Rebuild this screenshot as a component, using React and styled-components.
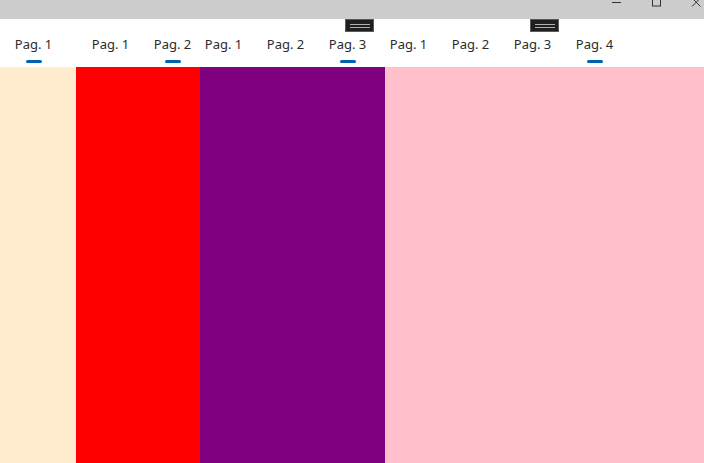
import styled, { createGlobalStyle } from 'styled-components';

const GlobalStyle = createGlobalStyle`
    html, body {
        margin: 0;
        padding: 0;
        overflow: hidden;
        background: #ffffff;
    }
`;

const Window = styled.div`
    display: flex;
    flex-direction: column;
    width: 704px;
    height: 463px;
    font-family: 'Segoe UI', 'Noto Sans', 'Open Sans', sans-serif;
`;

const TitleBar = styled.div`
    height: 19px;
    background: #cccccc;
    display: flex;
    justify-content: flex-end;
    overflow: hidden;
    flex-shrink: 0;
`;

const Controls = styled.div`
    display: flex;
    gap: 24px;
`;

const Control = styled.div`
    width: 16px;
    height: 19px;
    display: flex;
`;

const Panes = styled.div`
    display: flex;
    flex: 1;
    min-height: 0;
`;

const Pane = styled.div`
    position: relative;
    display: flex;
    flex-direction: column;
    width: ${(p) => p.$width}px;
    flex-shrink: 0;
`;

const Header = styled.div`
    height: 48px;
    background: #ffffff;
    display: flex;
    padding-left: ${(p) => p.$inset}px;
    gap: 25px;
    overflow: hidden;
    white-space: nowrap;
`;

const Tab = styled.div`
    display: flex;
    flex-direction: column;
    align-items: center;
    padding-top: 16px;
    font-size: 13px;
    line-height: 19px;
    color: #2b2b2b;
    width: 37px;
`;

const Indicator = styled.div`
    margin-top: 6px;
    width: 16px;
    height: 3px;
    border-radius: 2px;
    background: ${(p) => (p.$active ? '#0063b1' : 'transparent')};
`;

const Content = styled.div`
    flex: 1;
    background: ${(p) => p.$color};
`;

const Grip = styled.div`
    position: absolute;
    top: 0;
    left: ${(p) => p.$left}px;
    width: 27px;
    height: 11px;
    background: #1f1f1f;
    border: 1px solid #5a5a5a;
    display: flex;
    flex-direction: column;
    justify-content: center;
    align-items: center;
    gap: 2px;
`;

const GripLine = styled.div`
    width: 20px;
    height: 1px;
    background: #b0b0b0;
`;

const panes = [
    { width: 76, color: '#ffebcd', inset: 15, tabs: 1, active: 0 },
    { width: 124, color: '#ff0000', inset: 16, tabs: 2, active: 1 },
    { width: 185, color: '#800080', inset: 5, tabs: 3, active: 2, grip: 145 },
    { width: 319, color: '#ffc0cb', inset: 5, tabs: 4, active: 3, grip: 145 },
];

export default function App() {
    return (
        <Window>
            <GlobalStyle />
            <TitleBar>
                <Controls>
                    <Control>
                        <svg width="16" height="19" viewBox="0 0 16 19">
                            <line x1="4" y1="2.5" x2="13" y2="2.5" stroke="#333" strokeWidth="1" />
                        </svg>
                    </Control>
                    <Control>
                        <svg width="16" height="19" viewBox="0 0 16 19">
                            <rect x="4.5" y="-3" width="8" height="9" fill="none" stroke="#333" strokeWidth="1" />
                        </svg>
                    </Control>
                    <Control>
                        <svg width="16" height="19" viewBox="0 0 16 19">
                            <path d="M4 -2 L12.5 6.5 M12.5 -2 L4 6.5" stroke="#333" strokeWidth="1" />
                        </svg>
                    </Control>
                </Controls>
            </TitleBar>
            <Panes>
                {panes.map((pane, i) => (
                    <Pane key={i} $width={pane.width}>
                        <Header $inset={pane.inset}>
                            {Array.from({ length: pane.tabs }).map((_, t) => (
                                <Tab key={t}>
                                    <span>Pag. {t + 1}</span>
                                    <Indicator $active={t === pane.active} />
                                </Tab>
                            ))}
                        </Header>
                        <Content $color={pane.color} />
                        {pane.grip && (
                            <Grip $left={pane.grip}>
                                <GripLine />
                                <GripLine />
                            </Grip>
                        )}
                    </Pane>
                ))}
            </Panes>
        </Window>
    );
}
